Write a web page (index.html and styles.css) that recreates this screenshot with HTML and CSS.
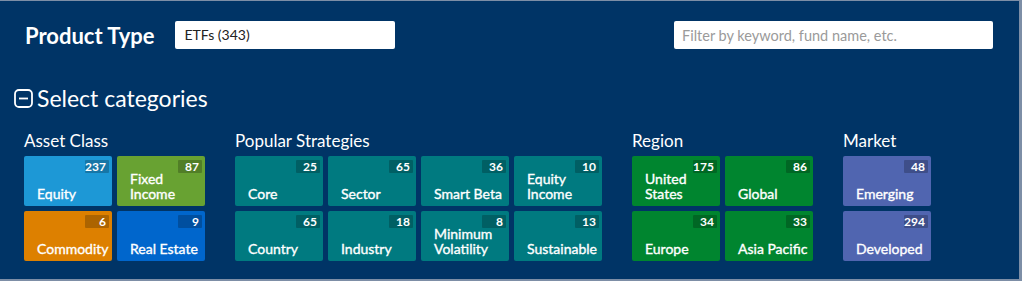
FILE: index.html
```html
<!DOCTYPE html>
<html>
  <head>
    <title>Product finder</title>
    <link rel="stylesheet" href="styles.css">
  </head>
  <body>
    <main class="panel">
      <header class="top-bar">
        <h1>Product Type</h1>
        <div class="product-select">ETFs (343)</div>
        <input class="filter" type="text" placeholder="Filter by keyword, fund name, etc.">
      </header>

      <div class="toggle">
        <svg class="toggle-icon" width="19" height="19" viewBox="0 0 19 19">
          <rect x="1" y="1" width="17" height="17" rx="4" fill="none" stroke="#fff" stroke-width="1.8"/>
          <line x1="5" y1="9.5" x2="14" y2="9.5" stroke="#fff" stroke-width="1.8"/>
        </svg>
        Select categories
      </div>

      <div class="groups">
        <section class="group">
          <h2>Asset Class</h2>
          <div class="tiles cols-2">
            <div class="tile equity"><span class="count">237</span><span class="label">Equity</span></div>
            <div class="tile fixed"><span class="count">87</span><span class="label">Fixed<br>Income</span></div>
            <div class="tile commodity"><span class="count">6</span><span class="label">Commodity</span></div>
            <div class="tile estate"><span class="count">9</span><span class="label">Real Estate</span></div>
          </div>
        </section>

        <section class="group">
          <h2>Popular Strategies</h2>
          <div class="tiles cols-4">
            <div class="tile teal"><span class="count">25</span><span class="label">Core</span></div>
            <div class="tile teal"><span class="count">65</span><span class="label">Sector</span></div>
            <div class="tile teal"><span class="count">36</span><span class="label">Smart Beta</span></div>
            <div class="tile teal"><span class="count">10</span><span class="label">Equity<br>Income</span></div>
            <div class="tile teal"><span class="count">65</span><span class="label">Country</span></div>
            <div class="tile teal"><span class="count">18</span><span class="label">Industry</span></div>
            <div class="tile teal"><span class="count">8</span><span class="label">Minimum<br>Volatility</span></div>
            <div class="tile teal"><span class="count">13</span><span class="label">Sustainable</span></div>
          </div>
        </section>

        <section class="group">
          <h2>Region</h2>
          <div class="tiles cols-2">
            <div class="tile green"><span class="count">175</span><span class="label">United<br>States</span></div>
            <div class="tile green"><span class="count">86</span><span class="label">Global</span></div>
            <div class="tile green"><span class="count">34</span><span class="label">Europe</span></div>
            <div class="tile green"><span class="count">33</span><span class="label">Asia Pacific</span></div>
          </div>
        </section>

        <section class="group">
          <h2>Market</h2>
          <div class="tiles cols-1">
            <div class="tile market"><span class="count">48</span><span class="label">Emerging</span></div>
            <div class="tile market"><span class="count">294</span><span class="label">Developed</span></div>
          </div>
        </section>
      </div>
    </main>
  </body>
</html>
```

FILE: styles.css
```css
body {
  margin: 0;
  background-color: #7d8ea6;
}
* {
  font-family: Lato, "Open Sans", sans-serif;
  box-sizing: border-box;
}
.panel {
  width: 1019px;
  margin-top: 1px;
  padding: 20px 26px 18px 24px;
  background-color: #003466;
  color: #fff;
}
.top-bar {
  display: flex;
  align-items: center;
  height: 28px;
}
.top-bar h1 {
  margin: 0 20px 0 1px;
  font-size: 22px;
  font-weight: 700;
}
.product-select {
  width: 220px;
  height: 28px;
  padding-left: 10px;
  line-height: 28px;
  font-size: 14px;
  color: #222;
  background-color: #fff;
  border-radius: 2px;
}
.filter {
  margin-left: auto;
  width: 319px;
  height: 28px;
  padding: 0 8px;
  border: none;
  outline: none;
  font-size: 14.5px;
  border-radius: 2px;
}
.filter::placeholder {
  color: #9a9a9a;
}
.toggle {
  display: flex;
  align-items: center;
  gap: 4px;
  margin: 35px 0 0 -10px;
  height: 28px;
  font-size: 23px;
}
.groups {
  display: flex;
  gap: 30px;
  margin-top: 19px;
}
.group h2 {
  margin: 0 0 5px;
  font-size: 17px;
  font-weight: 400;
  line-height: 20px;
}
.tiles {
  display: grid;
  grid-auto-rows: 50px;
  gap: 5px;
}
.cols-1 { grid-template-columns: 88px; }
.cols-2 { grid-template-columns: repeat(2, 88px); }
.cols-4 { grid-template-columns: repeat(4, 88px); }
.tile {
  position: relative;
  display: flex;
  align-items: flex-end;
  padding: 0 0 5px 13px;
  border-radius: 2px;
  overflow: hidden;
}
.label {
  font-size: 14px;
  font-weight: 400;
  line-height: 15px;
  white-space: nowrap;
  -webkit-text-stroke: 0.35px #fff;
}
.count {
  position: absolute;
  top: 4px;
  right: 3px;
  width: 24px;
  height: 13px;
  padding-right: 3px;
  text-align: right;
  font-size: 12px;
  font-weight: 700;
  line-height: 13px;
  background-color: rgba(0, 0, 0, 0.22);
  border-radius: 1px;
}
.equity { background-color: #1d98d6; }
.fixed { background-color: #68a232; }
.commodity { background-color: #dd8000; }
.estate { background-color: #0066cc; }
.teal { background-color: #007a80; }
.green { background-color: #00852f; }
.market { background-color: #5065b0; }
```
